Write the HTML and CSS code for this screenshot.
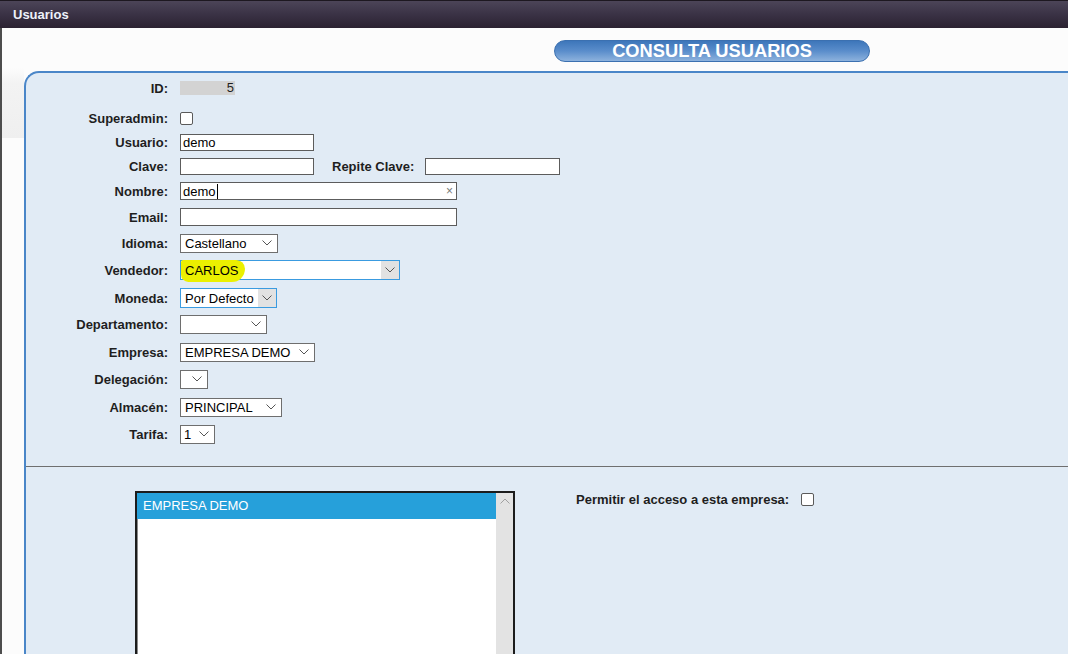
FILE: index.html
```html
<!DOCTYPE html>
<html lang="es">
<head>
<meta charset="utf-8">
<title>Usuarios</title>
<link rel="stylesheet" href="styles.css">
</head>
<body>
<div class="titlebar">Usuarios</div>
<div class="main">
  <div class="header"><div class="pill">CONSULTA USUARIOS</div></div>
  <div class="panel">
    <div class="form">
      <div class="lbl">ID:</div>
      <div class="cell"><div class="idbox">5</div></div>

      <div class="lbl">Superadmin:</div>
      <div class="cell"><div class="check"></div></div>

      <div class="lbl">Usuario:</div>
      <div class="cell"><div class="input w-short">demo</div></div>

      <div class="lbl">Clave:</div>
      <div class="cell">
        <div class="input w-short"></div>
        <div class="lbl lbl-inline">Repite Clave:</div>
        <div class="input w-repite"></div>
      </div>

      <div class="lbl">Nombre:</div>
      <div class="cell"><div class="input w-long tall">demo<span class="caret"></span><span class="spacer"></span><span class="clear">×</span></div></div>

      <div class="lbl">Email:</div>
      <div class="cell"><div class="input w-long tall"></div></div>

      <div class="lbl">Idioma:</div>
      <div class="cell"><div class="select w-idioma"><span class="val">Castellano</span><span class="arrow"><svg viewBox="0 0 10 6" width="10" height="6"><path d="M0.5 0.5 L5 5 L9.5 0.5" fill="none" stroke="#555" stroke-width="1"/></svg></span></div></div>

      <div class="lbl">Vendedor:</div>
      <div class="cell"><div class="select focus w-vendedor"><span class="marker"></span><span class="val">CARLOS</span><span class="arrow box"><svg viewBox="0 0 10 6" width="10" height="6"><path d="M0.5 0.5 L5 5 L9.5 0.5" fill="none" stroke="#555" stroke-width="1"/></svg></span></div></div>

      <div class="lbl">Moneda:</div>
      <div class="cell"><div class="select focus w-moneda"><span class="val">Por Defecto</span><span class="arrow box"><svg viewBox="0 0 10 6" width="10" height="6"><path d="M0.5 0.5 L5 5 L9.5 0.5" fill="none" stroke="#555" stroke-width="1"/></svg></span></div></div>

      <div class="lbl">Departamento:</div>
      <div class="cell"><div class="select w-depto"><span class="val"></span><span class="arrow"><svg viewBox="0 0 10 6" width="10" height="6"><path d="M0.5 0.5 L5 5 L9.5 0.5" fill="none" stroke="#555" stroke-width="1"/></svg></span></div></div>

      <div class="lbl">Empresa:</div>
      <div class="cell"><div class="select w-empresa"><span class="val">EMPRESA DEMO</span><span class="arrow"><svg viewBox="0 0 10 6" width="10" height="6"><path d="M0.5 0.5 L5 5 L9.5 0.5" fill="none" stroke="#555" stroke-width="1"/></svg></span></div></div>

      <div class="lbl">Delegación:</div>
      <div class="cell"><div class="select w-deleg"><span class="val"></span><span class="arrow"><svg viewBox="0 0 10 6" width="10" height="6"><path d="M0.5 0.5 L5 5 L9.5 0.5" fill="none" stroke="#555" stroke-width="1"/></svg></span></div></div>

      <div class="lbl">Almacén:</div>
      <div class="cell"><div class="select w-almacen"><span class="val">PRINCIPAL</span><span class="arrow"><svg viewBox="0 0 10 6" width="10" height="6"><path d="M0.5 0.5 L5 5 L9.5 0.5" fill="none" stroke="#555" stroke-width="1"/></svg></span></div></div>

      <div class="lbl">Tarifa:</div>
      <div class="cell"><div class="select w-tarifa"><span class="val">1</span><span class="arrow"><svg viewBox="0 0 10 6" width="10" height="6"><path d="M0.5 0.5 L5 5 L9.5 0.5" fill="none" stroke="#555" stroke-width="1"/></svg></span></div></div>
    </div>

    <div class="sep"></div>

    <div class="bottom">
      <div class="listbox">
        <div class="items">
          <div class="item selected">EMPRESA DEMO</div>
        </div>
        <div class="scrollbar"><svg viewBox="0 0 10 6" width="10" height="6"><path d="M0.5 5.5 L5 1 L9.5 5.5" fill="none" stroke="#a0a0a0" stroke-width="1"/></svg></div>
      </div>
      <div class="permit">
        <span class="permit-lbl">Permitir el acceso a esta empresa:</span>
        <div class="check"></div>
      </div>
    </div>
  </div>
</div>
</body>
</html>
```

FILE: styles.css
```css
* { box-sizing: border-box; }
html, body {
  margin: 0;
  padding: 0;
  width: 1068px;
  height: 654px;
  overflow: hidden;
  font-family: "Liberation Sans", Arial, sans-serif;
  font-size: 13px;
  color: #1e1e1e;
  background: #fcfcfc;
}
.titlebar {
  height: 28px;
  border-top: 1px solid #1d1820;
  background: linear-gradient(to bottom, #4c4558 0%, #3a3245 50%, #2b2231 100%);
  color: #eef2fa;
  font-weight: bold;
  font-size: 13px;
  line-height: 27px;
  padding-left: 13px;
}
.main {
  height: 626px;
  border-left: 2px solid #4d4d4d;
  background-color: #fcfcfc;
  background-image: linear-gradient(to bottom, rgba(0,0,0,0) 0px, rgba(0,0,0,0) 40px, #f3f3f3 55px, #efefef 110px, rgba(0,0,0,0) 110px);
  background-size: 22px 100%;
  background-repeat: no-repeat;
  overflow: hidden;
}
.header {
  padding-top: 12px;
  padding-left: 552px;
  height: 43px;
}
.pill {
  width: 316px;
  height: 22px;
  border: 1px solid #3b70b0;
  border-radius: 11px;
  background: linear-gradient(to bottom, #3d76ba 0%, #5a8dcb 50%, #8db2dd 100%);
  color: #fff;
  font-weight: bold;
  font-size: 18.3px;
  line-height: 20px;
  text-align: center;
}
.panel {
  margin-left: 22px;
  width: 1100px;
  height: 600px;
  background: #e1ebf5;
  border-top: 2px solid #4a86c8;
  border-left: 2px solid #4a86c8;
  border-top-left-radius: 15px;
}
.form {
  display: grid;
  grid-template-columns: 142px auto;
  column-gap: 12px;
  grid-template-rows: 30px 30px 18px 30px 20px 32px 20px 34px 22px 30px 26px 28px 28px 26px;
  align-items: center;
}
.lbl {
  font-weight: bold;
  text-align: right;
  line-height: 15px;
  white-space: nowrap;
}
.cell {
  display: flex;
  align-items: center;
}
.lbl-inline {
  margin-left: 18px;
  margin-right: 11px;
}
.idbox {
  width: 55px;
  height: 14px;
  background: #d3d3d3;
  text-align: right;
  padding-right: 1px;
  line-height: 14px;
}
.check {
  width: 13px;
  height: 13px;
  background: #fff;
  border: 1px solid #5a5a5a;
  border-radius: 2px;
}
.input {
  height: 17px;
  background: #fff;
  border: 1px solid #5c5c5c;
  padding-left: 2px;
  line-height: 15px;
  display: flex;
  align-items: center;
  color: #000;
}
.input.tall { height: 18px; }
.w-short { width: 134px; }
.w-repite { width: 135px; }
.w-long { width: 277px; }
.caret {
  display: inline-block;
  width: 1px;
  height: 15px;
  background: #000;
  margin-left: 1px;
}
.spacer { flex: 1; }
.clear {
  color: #777;
  font-size: 12px;
  padding-right: 3px;
}
.select {
  position: relative;
  height: 19px;
  background: #fff;
  border: 1px solid #6e6e6e;
  display: flex;
  align-items: center;
  color: #000;
}
.select .val {
  position: relative;
  flex: 1;
  padding-left: 4px;
  white-space: nowrap;
  overflow: hidden;
  line-height: 15px;
}
.select .arrow {
  width: 18px;
  height: 100%;
  display: flex;
  align-items: center;
  justify-content: center;
  padding-right: 2px;
}
.select .arrow svg { display: block; }
.select.focus { border-color: #3a9be0; height: 20px; }
.select .arrow.box {
  background: #e2e2e2;
  width: 18px;
  padding-right: 0;
}
.marker {
  position: absolute;
  left: 0;
  top: -1px;
  width: 64px;
  height: 22px;
  background: #ebf000;
  border-radius: 3px 12px 18px 10px;
}
.w-idioma { width: 98px; }
.w-vendedor { width: 220px; }
.w-moneda { width: 97px; }
.w-depto { width: 87px; }
.w-empresa { width: 135px; }
.w-deleg { width: 28px; }
.w-almacen { width: 102px; }
.w-tarifa { width: 35px; }
.w-tarifa .val { padding-left: 3px; }
.sep {
  margin-top: 19px;
  height: 1px;
  background: #6f6f6f;
}
.bottom {
  display: flex;
  align-items: flex-start;
  padding-left: 109px;
  padding-top: 24px;
}
.listbox {
  width: 380px;
  height: 220px;
  border: 2px solid #1c1c1c;
  box-shadow: inset 0 0 0 1px #8a8a8a;
  background: #fff;
  display: flex;
}
.items {
  flex: 1;
}
.item {
  height: 26px;
  line-height: 26px;
  padding-left: 6px;
}
.item.selected {
  background: #26a0da;
  color: #fff;
}
.scrollbar {
  width: 17px;
  background: #e3e3e3;
  display: flex;
  justify-content: center;
  padding-top: 5px;
}
.scrollbar svg { display: block; }
.permit {
  margin-left: 61px;
  margin-top: 1px;
  height: 15px;
  display: flex;
  align-items: center;
}
.permit-lbl {
  font-weight: bold;
  margin-right: 12px;
  line-height: 15px;
}
```
